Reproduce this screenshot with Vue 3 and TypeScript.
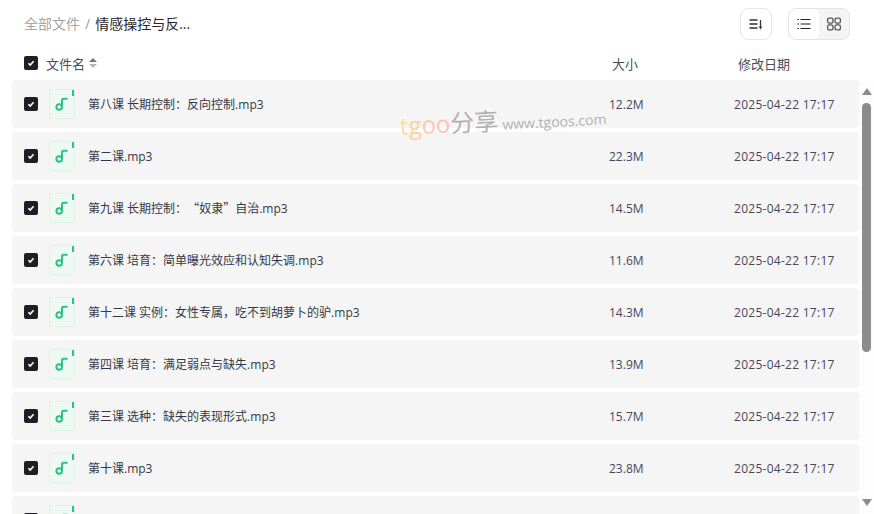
<script setup lang="ts">
interface FileRow {
  name: string;
  size: string;
  date: string;
}

const date = '2025-04-22 17:17';

const files: FileRow[] = [
  { name: '第八课 长期控制：反向控制.mp3', size: '12.2M', date },
  { name: '第二课.mp3', size: '22.3M', date },
  { name: '第九课 长期控制：“奴隶”自治.mp3', size: '14.5M', date },
  { name: '第六课 培育：简单曝光效应和认知失调.mp3', size: '11.6M', date },
  { name: '第十二课 实例：女性专属，吃不到胡萝卜的驴.mp3', size: '14.3M', date },
  { name: '第四课 培育：满足弱点与缺失.mp3', size: '13.9M', date },
  { name: '第三课 选种：缺失的表现形式.mp3', size: '15.7M', date },
  { name: '第十课.mp3', size: '23.8M', date },
  // the ninth row is scrolled almost out of view, its text is not visible
  { name: '', size: '', date: '' },
];

// curly quotes have to come from the CJK font to get their full width
const nameParts = (name: string) => name.split(/([“”])/).filter(Boolean);
</script>

<template>
  <div class="page">
    <header class="topbar">
      <nav class="crumbs">
        <span class="crumbs__root">全部文件</span>
        <span class="crumbs__sep">/</span>
        <span class="crumbs__current">情感操控与反...</span>
      </nav>
      <div class="tools">
        <button class="tool-btn" type="button" aria-label="排序">
          <svg width="16" height="16" viewBox="0 0 16 16" fill="none" stroke="#333" stroke-width="1.3">
            <path d="M1.5 4h8M1.5 8h8M1.5 12h8" />
            <path d="M12.5 4v7" />
            <path d="M10.7 10.4h3.6L12.5 13.4z" fill="#333" stroke="none" />
          </svg>
        </button>
        <div class="view-switch">
          <span class="view-switch__item view-switch__item--on">
            <svg width="14" height="14" viewBox="0 0 14 14" fill="none" stroke="#222" stroke-width="1.2">
              <path d="M3.5 2.5h10M3.5 7h10M3.5 11.5h10" />
              <path d="M.5 2.5h1.5M.5 7h1.5M.5 11.5h1.5" />
            </svg>
          </span>
          <span class="view-switch__item">
            <svg width="14" height="14" viewBox="0 0 14 14" fill="none" stroke="#555" stroke-width="1.3">
              <rect x=".6" y="1.1" width="5.4" height="5" rx="1.6" />
              <rect x="8" y="1.1" width="5.4" height="5" rx="1.6" />
              <rect x=".6" y="7.9" width="5.4" height="5" rx="1.6" />
              <rect x="8" y="7.9" width="5.4" height="5" rx="1.6" />
            </svg>
          </span>
        </div>
      </div>
    </header>

    <div class="columns">
      <div class="col-name">
        <span class="check">
          <svg width="8" height="8" viewBox="0 0 8 8"><path d="M1.4 4.2 3.2 6 6.6 2.2" fill="none" stroke="#fff" stroke-width="1.6" /></svg>
        </span>
        <span>文件名</span>
        <span class="sort-mark" aria-hidden="true"><i class="sort-mark__up"></i><i class="sort-mark__down"></i></span>
      </div>
      <div class="col-size">大小</div>
      <div class="col-date">修改日期</div>
    </div>

    <div class="body">
      <div class="list">
        <div v-for="(file, index) in files" :key="index" class="row">
          <div class="col-name col-name--row">
            <span class="check">
              <svg width="8" height="8" viewBox="0 0 8 8"><path d="M1.4 4.2 3.2 6 6.6 2.2" fill="none" stroke="#fff" stroke-width="1.6" /></svg>
            </span>
            <span class="file-icon">
              <i class="file-icon__corner"></i>
              <svg width="14" height="14" viewBox="0 0 14 14" fill="none" stroke="#2dc285" stroke-width="2">
                <circle cx="4.2" cy="10" r="2.8" />
                <path d="M7 10V3.4c0-1 .6-1.6 1.6-1.6h4" />
              </svg>
            </span>
            <span class="file-name">
              <template v-for="(part, i) in nameParts(file.name)" :key="i">
                <span v-if="part === '“' || part === '”'" class="file-name__quote">{{ part }}</span>
                <template v-else>{{ part }}</template>
              </template>
            </span>
          </div>
          <div class="col-size col-size--row">{{ file.size }}</div>
          <div class="col-date col-date--row">{{ file.date }}</div>
        </div>
      </div>
      <div class="scrollbar" aria-hidden="true">
        <i class="scrollbar__up"></i>
        <i class="scrollbar__thumb"></i>
        <i class="scrollbar__down"></i>
      </div>
    </div>

    <div class="watermark">
      <span class="watermark__t">t</span><span class="watermark__g">g</span><span class="watermark__o1">o</span><span class="watermark__o2">o</span><span class="watermark__cn">分享</span>
      <span class="watermark__url">www.tgoos.com</span>
    </div>
  </div>
</template>

<style>
html,
body {
  margin: 0;
  background: #fff;
  overflow: hidden;
}
</style>

<style scoped>
.page {
  position: relative;
  width: 874px;
  height: 514px;
  overflow: hidden;
  font-family: "Open Sans", "Noto Sans CJK SC", sans-serif;
  font-size: 12px;
  color: #333;
  text-spacing-trim: space-all;
}

.topbar {
  display: flex;
  align-items: center;
  justify-content: space-between;
  height: 48px;
  padding: 0 24px;
}

.crumbs {
  display: flex;
  align-items: center;
  gap: 5px;
  margin-top: -2px;
  font-size: 14px;
}

.crumbs__root {
  color: #a5a5a5;
}

.crumbs__sep {
  color: #9aa0a8;
}

.crumbs__current {
  color: #25262b;
}

.tools {
  display: flex;
  align-items: center;
  gap: 16px;
}

.tool-btn {
  display: flex;
  align-items: center;
  justify-content: center;
  width: 32px;
  height: 32px;
  padding: 0;
  border: 1px solid #e6e6e6;
  border-radius: 8px;
  background: #fff;
}

.view-switch {
  display: flex;
  width: 62px;
  height: 32px;
  box-sizing: border-box;
  border: 1px solid #e4e4e4;
  border-radius: 8px;
  background: #f4f4f4;
  overflow: hidden;
}

.view-switch__item {
  display: flex;
  flex: 1;
  align-items: center;
  justify-content: center;
}

.view-switch__item--on {
  border-radius: 7px;
  background: #fff;
}

.columns {
  display: flex;
  align-items: center;
  height: 30px;
  margin-bottom: 2px;
  padding-left: 12px;
  padding-right: 15px;
  font-size: 13px;
  color: #4a4d5a;
}

.col-name {
  display: flex;
  align-items: center;
  flex: 1;
  min-width: 0;
  padding-left: 12px;
}

.col-size {
  width: 166px;
  box-sizing: border-box;
  padding-left: 69px;
}

.col-date {
  width: 150px;
  box-sizing: border-box;
  padding-left: 29px;
}

.check {
  display: flex;
  align-items: center;
  justify-content: center;
  flex-shrink: 0;
  width: 14px;
  height: 14px;
  margin-right: 8px;
  border-radius: 2px;
  background: #1e1f24;
}

.sort-mark {
  display: flex;
  flex-direction: column;
  gap: 2px;
  margin-left: 4px;
}

.sort-mark i {
  display: block;
  width: 0;
  height: 0;
  border-left: 4px solid transparent;
  border-right: 4px solid transparent;
}

.sort-mark__up {
  border-bottom: 4px solid #777;
}

.sort-mark__down {
  border-top: 4px solid #b5b5b5;
}

.body {
  display: flex;
  height: 434px;
}

.list {
  display: flex;
  flex: 1;
  flex-direction: column;
  gap: 4px;
  min-width: 0;
  padding-left: 12px;
  overflow: hidden;
}

.row {
  display: flex;
  flex-shrink: 0;
  align-items: center;
  height: 48px;
  border-radius: 4px;
  background: #f5f5f5;
  color: #343846;
}

.col-name--row {
  height: 100%;
}

.col-size--row,
.col-date--row {
  font-size: 12px;
  color: #444858;
}

.col-size--row {
  padding-left: 66px;
}

.col-date--row {
  padding-left: 25px;
  letter-spacing: 0.27px;
}

.file-name__quote {
  font-family: "Noto Sans CJK SC", sans-serif;
}

.file-icon {
  position: relative;
  display: flex;
  align-items: center;
  justify-content: center;
  flex-shrink: 0;
  box-sizing: border-box;
  width: 26px;
  height: 30px;
  margin-left: 3px;
  margin-right: 13px;
  border: 1px solid #dff1e9;
  border-radius: 2px;
  background: #eef9f4;
}

.file-icon__corner {
  position: absolute;
  top: 0;
  right: 0;
  width: 2px;
  height: 6px;
  background: #2dc285;
}

.scrollbar {
  display: flex;
  flex-direction: column;
  align-items: center;
  flex-shrink: 0;
  width: 15px;
  padding-top: 8px;
  box-sizing: border-box;
  background: #fdfdfd;
}

.scrollbar__up,
.scrollbar__down {
  display: block;
  width: 0;
  height: 0;
  border-left: 5px solid transparent;
  border-right: 5px solid transparent;
}

.scrollbar__up {
  border-bottom: 7px solid #8c8c8c;
}

.scrollbar__down {
  margin-top: 147px;
  border-top: 7px solid #8c8c8c;
}

.scrollbar__thumb {
  display: block;
  width: 9px;
  height: 249px;
  margin-top: 8px;
  border-radius: 5px;
  background: #8c8c8c;
}

.watermark {
  position: absolute;
  top: 112px;
  left: 400px;
  display: flex;
  align-items: baseline;
  font-size: 24px;
  line-height: 28px;
  white-space: nowrap;
  transform: rotate(-3deg);
  transform-origin: left center;
  opacity: 0.9;
}

.watermark__t {
  color: #fbdc9c;
}

.watermark__g {
  color: #fdcf96;
}

.watermark__o1 {
  color: #fec3ab;
}

.watermark__o2 {
  color: #febcb0;
}

.watermark__cn {
  color: #a9a9a9;
}

.watermark__url {
  margin-left: 4px;
  font-size: 14px;
  color: #a9a9a9;
}
</style>
